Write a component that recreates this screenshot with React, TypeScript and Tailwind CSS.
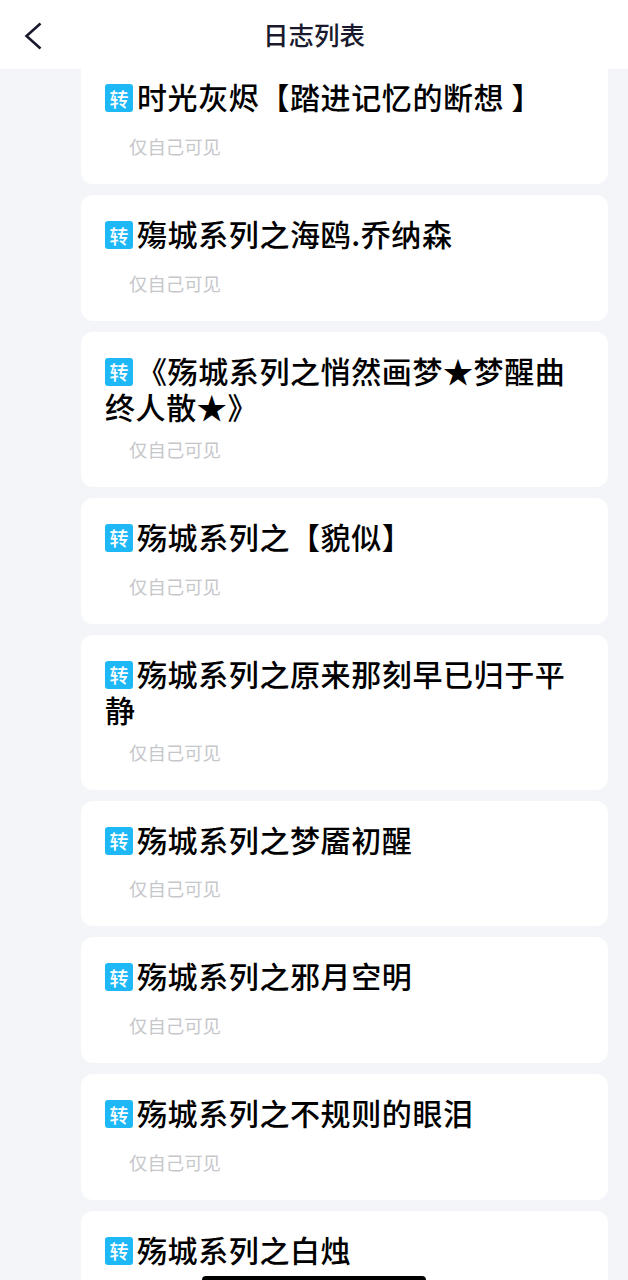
const cjk = { fontFamily: '"Noto Sans CJK SC", sans-serif' }

const items = [
  "时光灰烬【踏进记忆的断想 】",
  "殤城系列之海鸥.乔纳森",
  "《殇城系列之悄然画梦★梦醒曲终人散★》",
  "殇城系列之【貌似】",
  "殇城系列之原来那刻早已归于平静",
  "殇城系列之梦靥初醒",
  "殇城系列之邪月空明",
  "殇城系列之不规则的眼泪",
  "殇城系列之白烛",
]

function Card({ title }: { title: string }) {
  return (
    <div className="ml-[81px] mr-[20px] rounded-[12px] bg-white pl-[24px] pr-[26px] pt-[20px] pb-[25px]">
      <div className="min-h-[42.75px] text-[30px] font-medium leading-[36px] tracking-[0.6px] text-black">
        <span className="mr-[4px] inline-flex h-[28px] w-[28px] items-center justify-center rounded-[3px] bg-[#1fb8f7] align-[2.5px] text-[19px] font-medium leading-none tracking-normal text-white">
          转
        </span>
        {title}
      </div>
      <div className="mt-[12px] pl-[24px] text-[18.4px] leading-[26px] text-[#c6c7cb]">仅自己可见</div>
    </div>
  )
}

export default function App() {
  return (
    <div className="relative h-[1280px] w-[628px] overflow-hidden bg-[#f4f5f9]" style={cjk}>
      <header className="relative z-10 flex h-[69px] items-center justify-center bg-white pb-[2px]">
        <svg className="absolute left-[22px] top-[21px]" width="22" height="30" viewBox="0 0 22 30" fill="none">
          <path d="M18.5 2.5 L4.5 15 L18.5 27.5" stroke="#1a1a2e" strokeWidth="2.6" />
        </svg>
        <h1 className="text-[25.5px] font-medium leading-none text-[#1a1a2e]">日志列表</h1>
      </header>
      <div className="-mt-[10.75px] flex flex-col gap-[11px]">
        {items.map((t) => (
          <Card key={t} title={t} />
        ))}
      </div>
      <div className="absolute bottom-0 left-[202px] h-[4px] w-[224px] rounded-t-[4px] bg-black" />
    </div>
  )
}
